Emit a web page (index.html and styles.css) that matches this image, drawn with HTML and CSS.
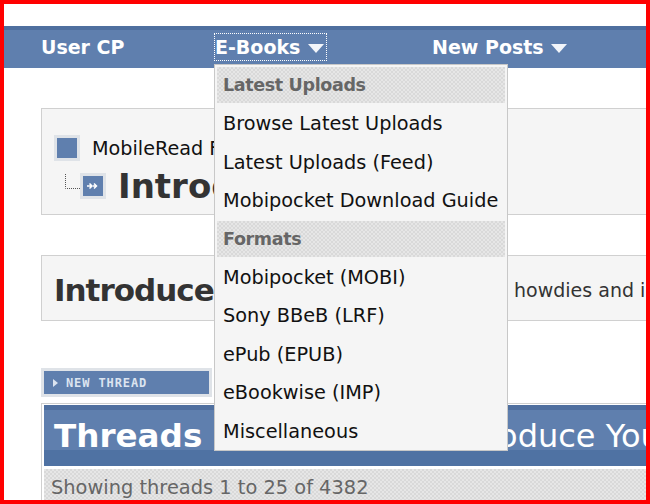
FILE: index.html
```html
<!DOCTYPE html>
<html lang="en">
<head>
    <meta charset="UTF-8">
    <title>MobileRead Forums</title>
    <link rel="stylesheet" href="styles.css">
</head>
<body>
    <div class="frame">
        <div class="navbar">
            <a class="nav-link nav-user">User CP</a>
            <a class="nav-link nav-ebooks">E-Books <span class="arrow"></span></a>
            <a class="nav-link nav-posts">New Posts <span class="arrow"></span></a>
        </div>

        <div class="content">
            <div class="box breadcrumb">
                <div class="crumb-top">
                    <span class="square"></span>
                    <span class="crumb-text">MobileRead Forums &gt; Introduce Yourself</span>
                </div>
                <div class="crumb-bottom">
                    <svg class="tree" width="16" height="18" viewBox="0 0 16 18">
                        <path d="M1.5 1V15.5H16" fill="none" stroke="#555" stroke-dasharray="1 1"/>
                    </svg>
                    <span class="square small">
                        <svg width="14" height="10" viewBox="0 0 14 10">
                            <path d="M1 5H5M3.5 2.5L6 5L3.5 7.5M8 2.5L10.5 5L8 7.5M7 5H10" fill="none" stroke="#fff" stroke-width="1.5"/>
                        </svg>
                    </span>
                    <strong class="crumb-title">Introduce Yourself</strong>
                </div>
            </div>

            <div class="box intro">
                <strong class="intro-title">Introduce Yourself</strong>
                <span class="intro-text"><span class="intro-lead">Say your</span> howdies and introduce yourself</span>
            </div>

            <a class="new-thread"><span class="btn-arrow"></span>NEW THREAD</a>

            <div class="threads">
                <div class="threads-head"><strong class="threads-word">Threads</strong> in Forum : Introduce Yourself</div>
                <div class="threads-count">Showing threads 1 to 25 of 4382</div>
            </div>
        </div>

        <div class="menu">
            <div class="menu-head">Latest Uploads</div>
            <a class="menu-item">Browse Latest Uploads</a>
            <a class="menu-item">Latest Uploads (Feed)</a>
            <a class="menu-item">Mobipocket Download Guide</a>
            <div class="menu-head">Formats</div>
            <a class="menu-item">Mobipocket (MOBI)</a>
            <a class="menu-item">Sony BBeB (LRF)</a>
            <a class="menu-item">ePub (EPUB)</a>
            <a class="menu-item">eBookwise (IMP)</a>
            <a class="menu-item">Miscellaneous</a>
        </div>
    </div>
</body>
</html>
```

FILE: styles.css
```css
* {
    margin: 0;
    padding: 0;
    box-sizing: border-box;
}

body {
    font-family: "DejaVu Sans", Verdana, sans-serif;
    background: #fff;
    overflow: hidden;
}

.frame {
    position: relative;
    width: 650px;
    height: 504px;
    border: 4px solid #f00;
    overflow: hidden;
    background: #fff;
}

/* Nav bar */
.navbar {
    display: flex;
    height: 42px;
    margin-top: 22px;
    background: #5f7fae;
    border-top: 4px solid #4f6f9f;
    font-size: 19px;
    font-weight: bold;
    color: #fff;
}

.nav-link {
    display: block;
    white-space: nowrap;
    line-height: 28px;
    height: 28px;
    margin-top: 3px;
}

.nav-user {
    margin-left: 37px;
    width: 173px;
}

.nav-ebooks {
    width: 113px;
    padding-left: 1px;
    outline: 1px dotted #fff;
    outline-offset: -1px;
}

.nav-posts {
    margin-left: 105px;
}

.arrow {
    display: inline-block;
    width: 0;
    height: 0;
    margin-left: 1px;
    border-left: 8px solid transparent;
    border-right: 8px solid transparent;
    border-top: 9px solid #f2f5fa;
    vertical-align: 1px;
}

/* Page content */
.content {
    padding-left: 37px;
    padding-top: 40px;
    width: 800px;
}

.box {
    background: #f5f5f5;
    border: 1px solid #d0d0d0;
}

.breadcrumb {
    height: 107px;
    padding: 26px 0 0 12px;
}

.crumb-top,
.crumb-bottom {
    display: flex;
    align-items: center;
    white-space: nowrap;
}

.square {
    display: flex;
    align-items: center;
    justify-content: center;
    width: 26px;
    height: 26px;
    background: #5f7fae;
    border: 3px solid #dfe3e8;
}

.crumb-text {
    margin-left: 12px;
    font-size: 19.2px;
    color: #111;
}

.crumb-bottom {
    margin-top: 12px;
    padding-left: 10px;
    height: 26px;
}

.tree {
    margin-top: -8px;
}

.crumb-title {
    margin-left: 12px;
    font-size: 34px;
    line-height: 38px;
    color: #333;
}

.intro {
    display: flex;
    align-items: center;
    height: 66px;
    margin-top: 40px;
    padding: 3px 0 0 12px;
    white-space: nowrap;
}

.intro-title {
    font-size: 31px;
    letter-spacing: -1px;
    color: #333;
}

.intro-text {
    margin-left: 61px;
    font-size: 19px;
    color: #333;
}

.intro-lead {
    margin-right: 6px;
}

.new-thread {
    display: flex;
    align-items: center;
    width: 171px;
    height: 29px;
    margin-top: 47px;
    padding-left: 9px;
    background: #5f7fae;
    border: 3px solid #dfe3e8;
    font-family: "DejaVu Sans Mono", monospace;
    font-size: 12px;
    font-weight: bold;
    letter-spacing: 0.9px;
    color: #dbe4f0;
}

.btn-arrow {
    width: 0;
    height: 0;
    margin-right: 8px;
    border-top: 4px solid transparent;
    border-bottom: 4px solid transparent;
    border-left: 5px solid #dbe4f0;
}

.threads {
    margin-top: 6px;
    padding: 1px 0 0 2px;
    border-left: 1px solid #d0d0d0;
    border-top: 1px solid #d0d0d0;
}

.threads-head {
    height: 61px;
    padding-left: 10px;
    background: linear-gradient(#4f6f9f 0, #4f6f9f 5px, #5f7fae 5px, #5f7fae 45px, #4f72a3 45px);
    font-size: 32px;
    line-height: 62px;
    color: #fff;
    white-space: nowrap;
}

.threads-word {
    font-size: 32.6px;
    margin-right: 59px;
}

.threads-count {
    height: 40px;
    margin-top: 3px;
    padding-left: 7px;
    background-color: #e0e0e0;
    background-image: repeating-conic-gradient(#d9d9d9 0 25%, #e6e6e6 0 50%);
    background-size: 4px 4px;
    font-size: 19.4px;
    line-height: 38px;
    color: #666;
    white-space: nowrap;
}

/* Dropdown menu */
.menu {
    position: absolute;
    left: 210px;
    top: 60px;
    width: 294px;
    height: 387px;
    padding: 2px;
    background: #f5f5f5;
    border: 1px solid #c8c8c8;
    font-size: 19.3px;
}

.menu-head {
    height: 36px;
    margin-bottom: 1px;
    padding-left: 6px;
    background-color: #e0e0e0;
    background-image: repeating-conic-gradient(#d9d9d9 0 25%, #e6e6e6 0 50%);
    background-size: 4px 4px;
    font-size: 17.5px;
    font-weight: bold;
    letter-spacing: -0.35px;
    line-height: 36px;
    color: #666;
}

.menu-item + .menu-head {
    margin-top: 1px;
}

.menu-item {
    display: block;
    height: 38.5px;
    padding-left: 6px;
    line-height: 40px;
    color: #111;
    white-space: nowrap;
}
```
